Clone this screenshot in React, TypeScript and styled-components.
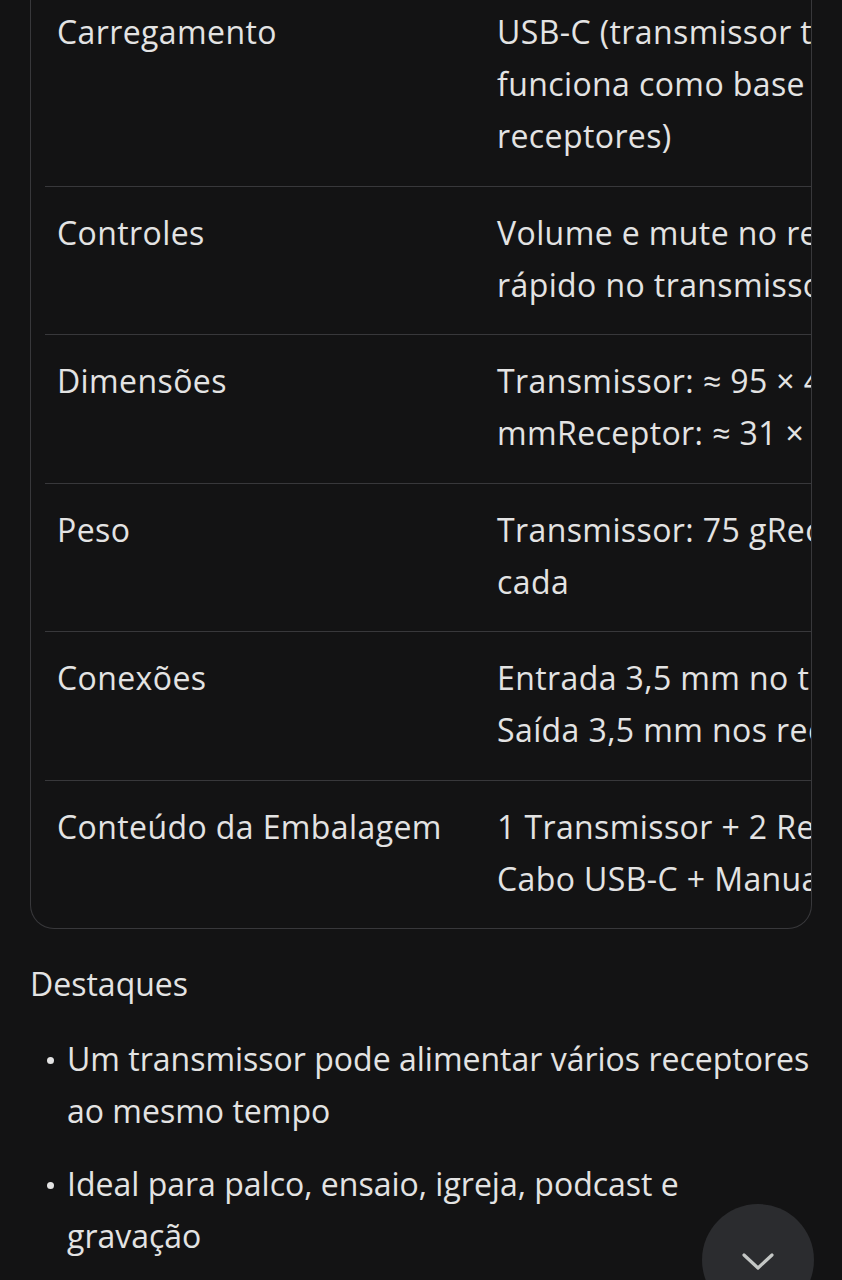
import React from 'react';
import styled, { createGlobalStyle } from 'styled-components';

const GlobalStyle = createGlobalStyle`
  *, *::before, *::after {
    box-sizing: border-box;
  }
  html, body {
    margin: 0;
    padding: 0;
    background: #131314;
  }
  body {
    font-family: "Open Sans", Roboto, sans-serif;
    color: #e3e3e3;
    overflow: hidden;
  }
`;

const Page = styled.div`
  width: 842px;
  height: 1280px;
  position: relative;
  overflow: hidden;
  background: #131314;
`;

const Card = styled.div`
  margin: -14px 30px 0 30px;
  border: 1px solid #38383b;
  border-top: none;
  border-radius: 0 0 24px 24px;
  overflow: hidden;
`;

const Table = styled.div`
  padding-left: 14px;
  width: 1100px;
`;

const Row = styled.div<{ last?: boolean }>`
  display: flex;
  padding: 20px 0 23.5px 0;
  border-bottom: ${({ last }) => (last ? 'none' : '1px solid #38383b')};
`;

const Cell = styled.div<{ wide?: boolean }>`
  width: ${({ wide }) => (wide ? '600px' : '440px')};
  padding-left: 12px;
  font-size: 32px;
  letter-spacing: 0.4px;
  line-height: 52px;
  color: #e3e3e3;
  white-space: nowrap;
`;

const Line = styled.span`
  display: block;
`;

const Section = styled.div`
  padding: 29px 30px 0 30px;
`;

const Heading = styled.div`
  font-size: 32px;
  line-height: 52px;
  color: #e3e3e3;
`;

const List = styled.ul`
  list-style: none;
  margin: 23px 0 0 0;
  padding: 0 0 0 37px;
  display: flex;
  flex-direction: column;
  gap: 21px;
`;

const Item = styled.li`
  position: relative;
  font-size: 32px;
  line-height: 52px;
  color: #e3e3e3;

  &::before {
    content: '';
    position: absolute;
    left: -20px;
    top: 24px;
    width: 7px;
    height: 7px;
    border-radius: 50%;
    background: #e3e3e3;
  }
`;

const Fab = styled.button`
  position: absolute;
  left: 702px;
  top: 1204px;
  width: 112px;
  height: 112px;
  border-radius: 50%;
  border: none;
  background: #2b2c2f;
  display: flex;
  align-items: flex-start;
  justify-content: center;
  padding-top: 48px;
  cursor: pointer;
`;

const rows: { label: string; value: string[] }[] = [
  { label: 'Carregamento', value: ['USB-C (transmissor também', 'funciona como base de carga para os', 'receptores)'] },
  { label: 'Controles', value: ['Volume e mute no receptor; mute', 'rápido no transmissor'] },
  { label: 'Dimensões', value: ['Transmissor: ≈ 95 × 45 × 20', 'mmReceptor: ≈ 31 × 45 × 20 mm'] },
  { label: 'Peso', value: ['Transmissor: 75 gReceptores: 25 g', 'cada'] },
  { label: 'Conexões', value: ['Entrada 3,5 mm no transmissor', 'Saída 3,5 mm nos receptores'] },
  { label: 'Conteúdo da Embalagem', value: ['1 Transmissor + 2 Receptores +', 'Cabo USB-C + Manual'] },
];

const highlights = [
  'Um transmissor pode alimentar vários receptores ao mesmo tempo',
  'Ideal para palco, ensaio, igreja, podcast e gravação',
];

const App = () => {
  return (
    <Page>
      <GlobalStyle />
      <Card>
        <Table>
          {rows.map((r, i) => (
            <Row key={r.label} last={i === rows.length - 1}>
              <Cell>{r.label}</Cell>
              <Cell wide>
                {r.value.map((l) => (
                  <Line key={l}>{l}</Line>
                ))}
              </Cell>
            </Row>
          ))}
        </Table>
      </Card>

      <Section>
        <Heading>Destaques</Heading>
        <List>
          {highlights.map((h) => (
            <Item key={h}>{h}</Item>
          ))}
        </List>
      </Section>

      <Fab aria-label="Rolar para baixo">
        <svg width="34" height="20" viewBox="0 0 34 20" fill="none">
          <path d="M3 3 L17 16 L31 3" stroke="#c4c7c5" strokeWidth="3.2" strokeLinecap="round" strokeLinejoin="round" />
        </svg>
      </Fab>
    </Page>
  );
};

export default App;
